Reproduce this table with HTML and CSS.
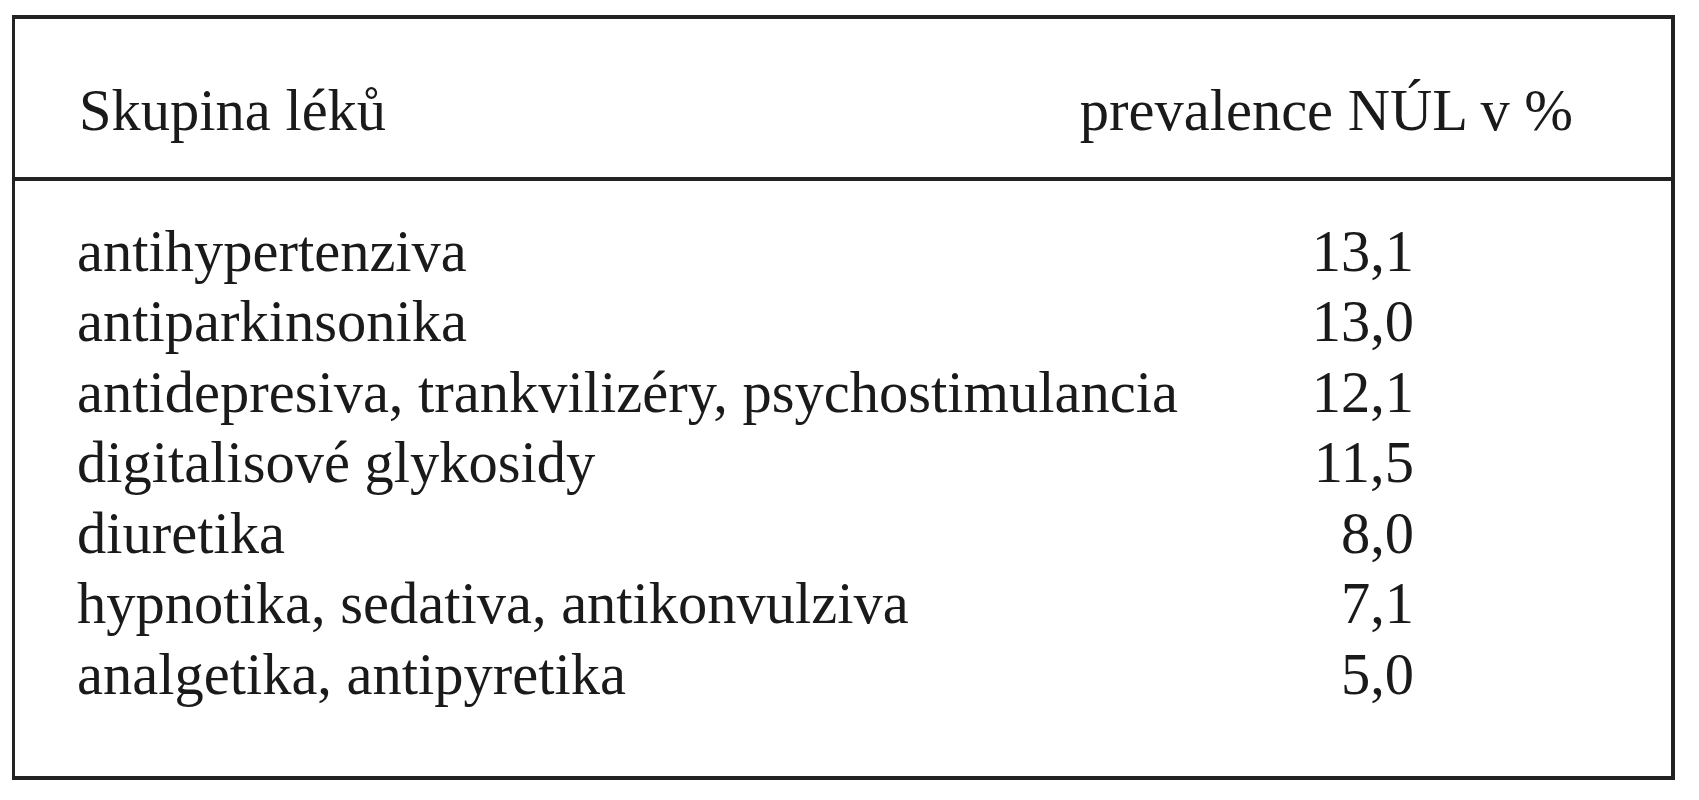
FILE: index.html
```html
<!DOCTYPE html>
<html lang="cs">
<head>
<meta charset="utf-8">
<title>Skupina léků</title>
<link rel="stylesheet" href="styles.css">
</head>
<body>
<div class="frame">
  <div class="head">
    <span class="h-left">Skupina léků</span>
    <span class="h-right">prevalence NÚL v %</span>
  </div>
  <div class="rows">
    <div class="label">antihypertenziva</div><div class="num">13,1</div>
    <div class="label">antiparkinsonika</div><div class="num">13,0</div>
    <div class="label">antidepresiva, trankvilizéry, psychostimulancia</div><div class="num">12,1</div>
    <div class="label">digitalisové glykosidy</div><div class="num">11,5</div>
    <div class="label">diuretika</div><div class="num">8,0</div>
    <div class="label">hypnotika, sedativa, antikonvulziva</div><div class="num">7,1</div>
    <div class="label">analgetika, antipyretika</div><div class="num">5,0</div>
  </div>
</div>
</body>
</html>
```

FILE: styles.css
```css
html, body {
  margin: 0;
  padding: 0;
  background: #ffffff;
}

body {
  font-family: "Liberation Serif", "Times New Roman", serif;
  font-size: 58.5px;
  line-height: 69.5px;
  color: #1a1a1a;
}

.frame {
  margin: 15px 0 0 12px;
  width: 1663px;
  height: 765px;
  box-sizing: border-box;
  border-style: solid;
  border-color: #222222;
  border-width: 4px 4px 4px 3px;
  display: flex;
  flex-direction: column;
}

.head {
  display: flex;
  justify-content: space-between;
  padding: 57px 98px 31px 64px;
  border-bottom: 4px solid #222222;
}

.rows {
  display: grid;
  grid-template-columns: 1fr auto;
  grid-auto-rows: 70.5px;
  padding: 36px 257px 0 62px;
  line-height: 70.5px;
}

.num {
  text-align: right;
}
```
